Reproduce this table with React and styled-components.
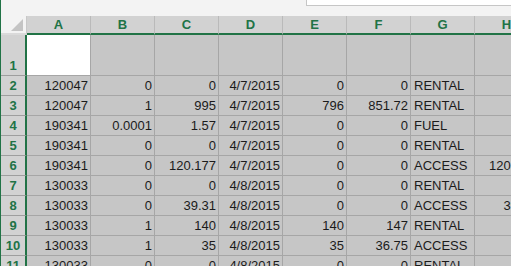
import React from "react";
import styled, { createGlobalStyle } from "styled-components";

const GlobalStyle = createGlobalStyle`
  html, body { margin: 0; padding: 0; overflow: hidden; background: #ffffff; }
  #root { width: 511px; height: 266px; overflow: hidden; }
`;

const Frame = styled.div`
  width: 510px;
  height: 266px;
  border-left: 1px solid #217346;
  background: #f3f3f3;
  overflow: hidden;
  font-family: "Liberation Sans", Arial, sans-serif;
  font-size: 13px;
  color: #1b1b1b;
`;

const TopBand = styled.div`
  height: 16px;
  background: #f3f3f3;
  display: flex;
  justify-content: flex-start;
  padding-left: 305px;
  box-sizing: border-box;
`;

const FormulaBox = styled.div`
  width: 220px;
  height: 6px;
  background: #ffffff;
  border-left: 1px solid #c6c6c6;
  border-bottom: 1px solid #c6c6c6;
  box-sizing: border-box;
`;

const Sheet = styled.div`
  display: grid;
  grid-template-columns: 26px repeat(8, 64px);
  grid-template-rows: 19px 41px repeat(10, 20px);
  width: max-content;
`;

const Corner = styled.div`
  position: relative;
  background: #f3f3f3;
  border-right: 1px solid #c8c8c8;
  border-bottom: 2px solid #dadada;
  box-sizing: border-box;
`;

const Triangle = styled.svg`
  position: absolute;
  right: 3px;
  bottom: 2px;
`;

const ColHeader = styled.div`
  background: #d2d2d2;
  color: #217346;
  font-weight: bold;
  text-align: center;
  line-height: 17px;
  border-right: 1px solid #bababa;
  border-bottom: 2px solid #217346;
  box-sizing: border-box;
`;

const RowHeader = styled.div`
  background: #d2d2d2;
  color: #217346;
  font-weight: bold;
  display: flex;
  align-items: flex-end;
  justify-content: center;
  line-height: 19px;
  border-right: 2px solid #217346;
  border-bottom: 1px solid #9e9e9e;
  box-sizing: border-box;
`;

const Cell = styled.div`
  background: ${(p) => (p.$active ? "#ffffff" : "#c6c6c6")};
  display: flex;
  align-items: flex-end;
  justify-content: ${(p) => (p.$text ? "flex-start" : "flex-end")};
  padding: 0 2px 0 3px;
  line-height: 19px;
  white-space: nowrap;
  overflow: hidden;
  border-right: 1px solid #a6a6a6;
  border-bottom: 1px solid #a6a6a6;
  box-sizing: border-box;
`;

const columns = ["A", "B", "C", "D", "E", "F", "G", "H"];

const data = [
  ["120047", "0", "0", "4/7/2015", "0", "0", "RENTAL", ""],
  ["120047", "1", "995", "4/7/2015", "796", "851.72", "RENTAL", ""],
  ["190341", "0.0001", "1.57", "4/7/2015", "0", "0", "FUEL", ""],
  ["190341", "0", "0", "4/7/2015", "0", "0", "RENTAL", ""],
  ["190341", "0", "120.177", "4/7/2015", "0", "0", "ACCESS", "120.177"],
  ["130033", "0", "0", "4/8/2015", "0", "0", "RENTAL", ""],
  ["130033", "0", "39.31", "4/8/2015", "0", "0", "ACCESS", "39.31"],
  ["130033", "1", "140", "4/8/2015", "140", "147", "RENTAL", ""],
  ["130033", "1", "35", "4/8/2015", "35", "36.75", "ACCESS", ""],
  ["130033", "0", "0", "4/8/2015", "0", "0", "RENTAL", ""],
];

export default function App() {
  return (
    <>
      <GlobalStyle />
      <Frame>
        <TopBand>
          <FormulaBox />
        </TopBand>
        <Sheet>
          <Corner>
            <Triangle width="12" height="12" viewBox="0 0 12 12">
              <polygon points="12,0 12,12 0,12" fill="#c4c4c4" />
            </Triangle>
          </Corner>
          {columns.map((c) => (
            <ColHeader key={c}>{c}</ColHeader>
          ))}
          <RowHeader>1</RowHeader>
          {columns.map((c, i) => (
            <Cell key={"r1" + c} $active={i === 0} />
          ))}
          {data.map((row, r) => (
            <React.Fragment key={r}>
              <RowHeader>{r + 2}</RowHeader>
              {row.map((v, i) => (
                <Cell key={i} $text={i === 6}>
                  {v}
                </Cell>
              ))}
            </React.Fragment>
          ))}
        </Sheet>
      </Frame>
    </>
  );
}
